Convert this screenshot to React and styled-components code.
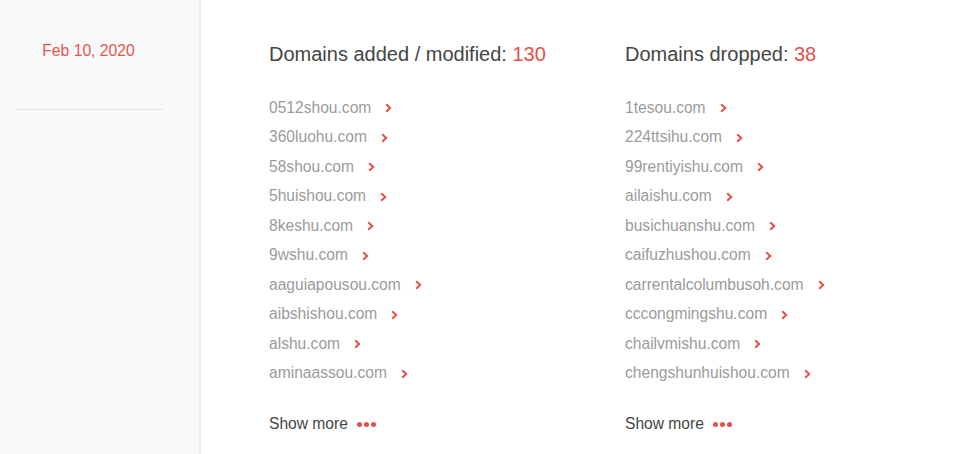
import React from "react";
import styled, { createGlobalStyle } from "styled-components";

const added = [
  "0512shou.com",
  "360luohu.com",
  "58shou.com",
  "5huishou.com",
  "8keshu.com",
  "9wshu.com",
  "aaguiapousou.com",
  "aibshishou.com",
  "alshu.com",
  "aminaassou.com",
];

const dropped = [
  "1tesou.com",
  "224ttsihu.com",
  "99rentiyishu.com",
  "ailaishu.com",
  "busichuanshu.com",
  "caifuzhushou.com",
  "carrentalcolumbusoh.com",
  "cccongmingshu.com",
  "chailvmishu.com",
  "chengshunhuishou.com",
];

function Chevron() {
  return (
    <ChevronIcon width="7" height="10" viewBox="0 0 7 10">
      <polyline points="1.2,1.2 5.2,5 1.2,8.8" fill="none" stroke="#e5504a" strokeWidth="2" />
    </ChevronIcon>
  );
}

function DomainColumn({ title, count, items }) {
  return (
    <Column>
      <Heading>
        {title}: <Count>{count}</Count>
      </Heading>
      <List>
        {items.map((d) => (
          <Item key={d}>
            <DomainLink href="#">{d}</DomainLink>
            <Chevron />
          </Item>
        ))}
      </List>
      <ShowMore href="#">
        Show more
        <Dots>
          <Dot />
          <Dot />
          <Dot />
        </Dots>
      </ShowMore>
    </Column>
  );
}

export default function App() {
  return (
    <>
      <GlobalStyle />
      <Page>
        <Sidebar>
          <DateBlock>
            <DateText>Feb 10, 2020</DateText>
          </DateBlock>
        </Sidebar>
        <Main>
          <DomainColumn title="Domains added / modified" count={130} items={added} />
          <DomainColumn title="Domains dropped" count={38} items={dropped} />
        </Main>
      </Page>
    </>
  );
}

//styled components
const GlobalStyle = createGlobalStyle`
  html, body {
    margin: 0;
    padding: 0;
    background: #fff;
    font-family: "Liberation Sans", Arial, sans-serif;
  }
`;

const Page = styled.div`
  display: flex;
  height: 454px;
  overflow: hidden;
`;

const Sidebar = styled.aside`
  width: 201px;
  flex-shrink: 0;
  background: #f8f9fb;
  border-right: 2px solid #ededf0;
  padding: 0 37px 0 14px;
  box-sizing: border-box;
`;

const DateBlock = styled.div`
  width: 149px;
  padding-top: 42px;
  height: 67px;
  border-bottom: 1px solid #e3e5e9;
  text-align: center;
`;

const DateText = styled.div`
  color: #e5574d;
  font-size: 15.7px;
  line-height: 18px;
`;

const Main = styled.main`
  display: flex;
  padding: 42px 0 0 68px;
`;

const Column = styled.section`
  width: 356px;
`;

const Heading = styled.h2`
  margin: 0;
  font-size: 20px;
  line-height: 24px;
  font-weight: normal;
  color: #454545;
`;

const Count = styled.span`
  color: #e5504a;
`;

const List = styled.ul`
  list-style: none;
  margin: 27px 0 0;
  padding: 0;
`;

const Item = styled.li`
  display: flex;
  align-items: center;
  height: 29.5px;
`;

const DomainLink = styled.a`
  color: #9b9b9b;
  font-size: 15.6px;
  text-decoration: none;
`;

const ChevronIcon = styled.svg`
  margin-left: 14px;
  margin-top: 1px;
`;

const ShowMore = styled.a`
  display: flex;
  align-items: center;
  margin-top: 26px;
  height: 20px;
  color: #454545;
  font-size: 15.6px;
  text-decoration: none;
`;

const Dots = styled.span`
  display: flex;
  gap: 2px;
  margin-left: 9px;
  margin-top: 1px;
`;

const Dot = styled.span`
  width: 5px;
  height: 5px;
  border-radius: 50%;
  background: #e5504a;
`;
